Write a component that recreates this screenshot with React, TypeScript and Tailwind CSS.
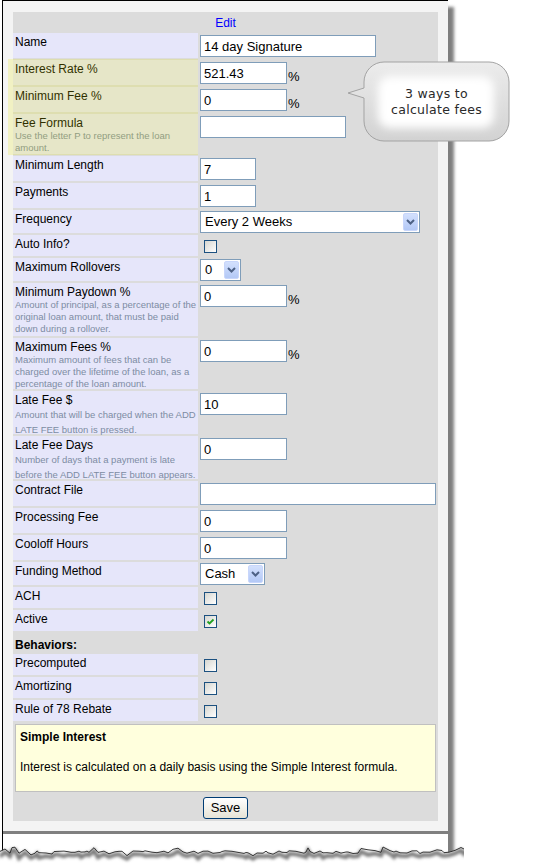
import type { ReactNode } from "react";

type FieldRow = {
  label: string;
  height: string;
  help?: string[];
  helpLeading?: string;
  heading?: boolean;
  field?: ReactNode;
};

function TextBox({ width, value, percent }: { width: string; value: string; percent?: boolean }) {
  return (
    <div className="flex items-end pt-[2px]">
      <input
        readOnly
        value={value}
        className={`${width} h-[22px] border border-[#7f9db9] bg-white px-[3px] text-[13px] text-black outline-none`}
      />
      {percent && <span className="ml-[1px] text-[13px] leading-[15px] text-black">%</span>}
    </div>
  );
}

function DropDown({ width, value }: { width: string; value: string }) {
  return (
    <div className="pt-[1px]">
      <div className={`${width} flex h-[22px] items-center justify-between border border-[#7f9db9] bg-white`}>
        <span className="pl-[4px] text-[13px] text-black">{value}</span>
        <span className="mr-[1px] flex h-[18px] w-[15px] items-center justify-center rounded-[2px] border border-[#c8d6fb] bg-linear-to-b from-[#d3e0fd] to-[#b3c8f6]">
          <svg width="9" height="6" viewBox="0 0 9 6">
            <path d="M1 1 L4.5 4.5 L8 1" fill="none" stroke="#4d6185" strokeWidth="2" />
          </svg>
        </span>
      </div>
    </div>
  );
}

function Tick({ checked }: { checked?: boolean }) {
  return (
    <div className="pl-[4px] pt-[5px]">
      <span className="flex h-[13px] w-[13px] items-center justify-center border border-[#1c5180] bg-linear-to-br from-[#d6d6d0] to-white">
        {checked && (
          <svg width="9" height="9" viewBox="0 0 9 9">
            <path d="M1.5 4.5 L3.5 6.5 L7.5 2.5" fill="none" stroke="#21a121" strokeWidth="1.8" />
          </svg>
        )}
      </span>
    </div>
  );
}

const rows: FieldRow[] = [
  { label: "Name", height: "h-[25px]", field: <TextBox width="w-[176px]" value="14 day Signature" /> },
  { label: "Interest Rate %", height: "h-[25px]", field: <TextBox width="w-[87px]" value="521.43" percent /> },
  { label: "Minimum Fee %", height: "h-[25px]", field: <TextBox width="w-[87px]" value="0" percent /> },
  {
    label: "Fee Formula",
    height: "h-[40px]",
    help: ["Use the letter P to represent the loan", "amount."],
    helpLeading: "leading-[12px]",
    field: <TextBox width="w-[146px]" value="" />,
  },
  { label: "Minimum Length", height: "h-[25px]", field: <TextBox width="w-[56px]" value="7" /> },
  { label: "Payments", height: "h-[25px]", field: <TextBox width="w-[56px]" value="1" /> },
  { label: "Frequency", height: "h-[23px]", field: <DropDown width="w-[220px]" value="Every 2 Weeks" /> },
  { label: "Auto Info?", height: "h-[21px]", field: <Tick /> },
  { label: "Maximum Rollovers", height: "h-[23px]", field: <DropDown width="w-[41px]" value="0" /> },
  {
    label: "Minimum Paydown %",
    height: "h-[53px]",
    help: ["Amount of principal, as a percentage of the", "original loan amount, that must be paid", "down during a rollover."],
    helpLeading: "leading-[12px]",
    field: <TextBox width="w-[87px]" value="0" percent />,
  },
  {
    label: "Maximum Fees %",
    height: "h-[51px]",
    help: ["Maximum amount of fees that can be", "charged over the lifetime of the loan, as a", "percentage of the loan amount."],
    helpLeading: "leading-[12px]",
    field: <TextBox width="w-[87px]" value="0" percent />,
  },
  {
    label: "Late Fee $",
    height: "h-[43px]",
    help: ["Amount that will be charged when the ADD", "LATE FEE button is pressed."],
    helpLeading: "leading-[15px]",
    field: <TextBox width="w-[87px]" value="10" />,
  },
  {
    label: "Late Fee Days",
    height: "h-[43px]",
    help: ["Number of days that a payment is late", "before the ADD LATE FEE button appears."],
    helpLeading: "leading-[15px]",
    field: <TextBox width="w-[87px]" value="0" />,
  },
  { label: "Contract File", height: "h-[25px]", field: <TextBox width="w-[236px]" value="" /> },
  { label: "Processing Fee", height: "h-[25px]", field: <TextBox width="w-[87px]" value="0" /> },
  { label: "Cooloff Hours", height: "h-[25px]", field: <TextBox width="w-[87px]" value="0" /> },
  { label: "Funding Method", height: "h-[23px]", field: <DropDown width="w-[65px]" value="Cash" /> },
  { label: "ACH", height: "h-[21px]", field: <Tick /> },
  { label: "Active", height: "h-[21px]", field: <Tick checked /> },
  { label: "Behaviors:", height: "h-[19px]", heading: true },
  { label: "Precomputed", height: "h-[21px]", field: <Tick /> },
  { label: "Amortizing", height: "h-[21px]", field: <Tick /> },
  { label: "Rule of 78 Rebate", height: "h-[21px]", field: <Tick /> },
];

function FormRow({ row }: { row: FieldRow }) {
  if (row.heading) {
    return (
      <div className={`${row.height} pl-[2px] pt-[5px] text-[12px] font-bold leading-[14px] text-black`}>
        {row.label}
      </div>
    );
  }
  return (
    <div className={`flex gap-[2px] ${row.height}`}>
      <div className="w-[185px] shrink-0 bg-[#e6e6fa] pl-[2px] pt-[2px]">
        <div className="text-[12px] leading-[14px] text-black">{row.label}</div>
        {row.help && (
          <div className={`text-[9.5px] text-[#7d8ca3] ${row.helpLeading}`}>
            {row.help.map((line) => (
              <div key={line} className="whitespace-nowrap">
                {line}
              </div>
            ))}
          </div>
        )}
      </div>
      <div className="flex-1">{row.field}</div>
    </div>
  );
}

// ragged bottom edge of the clipped page: uneven steps from a small LCG
function buildTorn() {
  const pts: [number, number][] = [];
  let seed = 7;
  const rand = () => {
    seed = (seed * 1103515245 + 12345) % 2147483648;
    return seed / 2147483648;
  };
  let x = 0;
  while (x < 470) {
    const r = rand();
    let y = 16 + (rand() - 0.5) * 3;
    if (r > 0.9) y -= 3.5;
    else if (r < 0.08) y += 2.5;
    if (x > 440) y -= (x - 440) * 0.15;
    pts.push([x, y]);
    x += 2 + Math.floor(rand() * 6);
  }
  return pts;
}
const tornPoints = buildTorn();
const tornLine = tornPoints.map(([x, y]) => `${x},${y.toFixed(1)}`).join(" ");
const shadowLine = tornPoints.map(([x, y], i) => `${x},${(y + 3 + (i % 5 === 0 ? 2 : 0)).toFixed(1)}`).join(" ");

function TornEdge() {
  return (
    <svg className="absolute left-0 top-[836px]" width="490" height="28" viewBox="0 0 490 28">
      <defs>
        <filter id="torn-blur" x="-5%" y="-50%" width="110%" height="200%">
          <feGaussianBlur stdDeviation="1.8" />
        </filter>
      </defs>
      <polygon points={`${tornLine} 490,28 0,28`} fill="#ffffff" />
      <polyline points={shadowLine} fill="none" stroke="#7a7a7a" strokeWidth="4" filter="url(#torn-blur)" />
      <polyline points={tornLine} fill="none" stroke="#222222" strokeWidth="0.9" />
      <rect x="464" y="0" width="26" height="28" fill="#ffffff" />
    </svg>
  );
}

function Callout() {
  return (
    <div className="absolute left-[346px] top-[60px] h-[84px] w-[166px]">
      <svg className="absolute inset-0" width="166" height="84" viewBox="0 0 166 84">
        <defs>
          <linearGradient id="bubble-fill" x1="0" y1="0" x2="0" y2="1">
            <stop offset="0" stopColor="#ececec" />
            <stop offset="1" stopColor="#d2d2d2" />
          </linearGradient>
          <filter id="bubble-glow" x="-20%" y="-30%" width="140%" height="160%">
            <feGaussianBlur stdDeviation="4" />
          </filter>
        </defs>
        <path
          d="M38 2 H143 A20 20 0 0 1 163 22 V61 A20 20 0 0 1 143 81 H38 A20 20 0 0 1 18 61 V38 L2 33 L18 28 V22 A20 20 0 0 1 38 2 Z"
          fill="url(#bubble-fill)"
          stroke="#a3a3a3"
          strokeWidth="1"
        />
        <rect x="32" y="16" width="116" height="52" rx="12" fill="#ffffff" filter="url(#bubble-glow)" />
      </svg>
      <div className="absolute left-[18px] top-[26px] w-[145px] text-center font-['DejaVu_Sans',Verdana,sans-serif] text-[12.5px] leading-[16px] tracking-[0.3px] text-[#2a2a2a]">
        <div>3 ways to</div>
        <div>calculate fees</div>
      </div>
    </div>
  );
}

export default function App() {
  return (
    <div className="relative h-[864px] w-[550px] overflow-hidden bg-white font-['Liberation_Sans',Arial,sans-serif]">
      <div className="ml-[2px] w-[446px] border-l border-t border-black shadow-[6px_7px_3px_rgba(0,0,0,0.5)]">
        <div className="bg-[#f4f4f4] px-[10px] pb-[10px] pt-[11px]">
          <div className="bg-[#dcdcdc] pb-[2px]">
            <div className="h-[19px] pt-[4px] text-center text-[12px] leading-[14px] text-[#0000ff]">Edit</div>

            <div className="mt-[2px] flex flex-col gap-[2px]">
              {rows.map((row) => (
                <FormRow key={row.label} row={row} />
              ))}
            </div>

            {/* description of the selected interest method */}
            <div className="mx-[2px] mt-[3px] h-[68px] border border-[#c0c0c0] bg-[#ffffdd] pl-[4px] pt-[5px] text-[12px] leading-[14px] text-black">
              <div className="font-bold">Simple Interest</div>
              <p className="mt-[16px]">Interest is calculated on a daily basis using the Simple Interest formula.</p>
            </div>

            <div className="mt-[5px] flex justify-center">
              <button className="h-[22px] w-[45px] rounded-[3px] border border-[#003c74] bg-linear-to-b from-white to-[#e6e3d6] text-[13px] text-black">
                Save
              </button>
            </div>
          </div>
        </div>
        <div className="h-[3px] bg-[#808080]" />
        <div className="h-[40px] bg-white" />
      </div>

      {/* highlight over the fee fields */}
      <div className="absolute left-[8px] top-[59px] h-[96px] w-[190px] bg-[rgba(230,230,0,0.2)]" />

      <Callout />
      <TornEdge />
    </div>
  );
}
